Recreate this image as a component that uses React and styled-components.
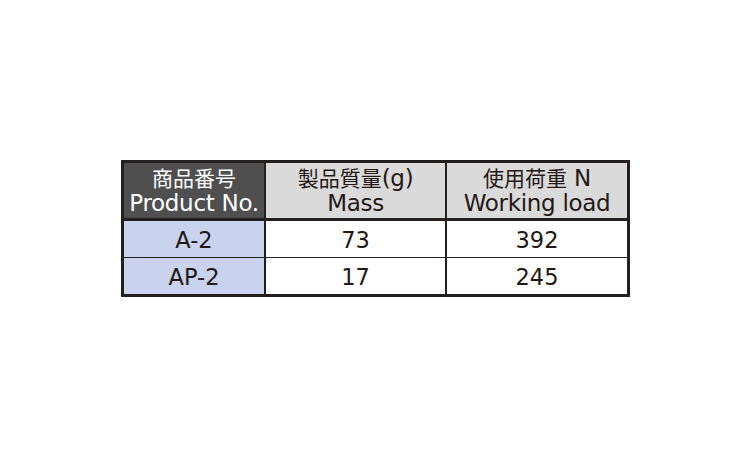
import React from "react";
import styled, { createGlobalStyle } from "styled-components";

const Global = createGlobalStyle`
  html, body { margin: 0; padding: 0; background: #ffffff; }
  body { width: 750px; height: 450px; font-family: "DejaVu Sans", "Noto Sans CJK JP", sans-serif; }
`;

const Page = styled.div`
  width: 750px;
  height: 450px;
  display: flex;
  align-items: flex-start;
  justify-content: flex-start;
  padding: 160px 0 0 121px;
  box-sizing: border-box;
`;

const Table = styled.table`
  border-collapse: collapse;
  border: 3px solid #231f1e;
  color: #231815;
  font-family: "DejaVu Sans", "Noto Sans CJK JP", sans-serif;
`;

const Head = styled.th`
  font-weight: 400;
  font-size: 23px;
  line-height: 25px;
  height: 54px;
  padding: 0 0 1px;
  text-align: center;
  vertical-align: middle;
  white-space: nowrap;
  letter-spacing: -0.3px;
  border-left: 2px solid #231f1e;
  border-bottom: 3px solid #231f1e;
  background: ${(p) => (p.$dark ? "#4f4f4f" : "#dadada")};
  color: ${(p) => (p.$dark ? "#ffffff" : "#231815")};
  width: ${(p) => p.$w}px;
`;

const Jp = styled.span`
  font-family: "Noto Sans CJK JP", sans-serif;
  font-size: 21px;
  letter-spacing: 0;
`;

const Cell = styled.td`
  font-size: 22.5px;
  height: 35px;
  padding: 1px 0 0;
  text-align: center;
  vertical-align: middle;
  border-left: 2px solid #231f1e;
  border-top: 1px solid #231f1e;
  background: ${(p) => (p.$blue ? "#c9d3ed" : "#ffffff")};
  line-height: 24px;
`;

const rows = [
  ["A-2", "73", "392"],
  ["AP-2", "17", "245"],
];

export default function App() {
  return (
    <>
      <Global />
      <Page>
        <Table>
          <thead>
            <tr>
              <Head $dark $w={140}><Jp>商品番号</Jp><br />Product No.</Head>
              <Head $w={179}><Jp>製品質量</Jp>(g)<br />Mass</Head>
              <Head $w={180}><Jp>使用荷重</Jp> N<br />Working load</Head>
            </tr>
          </thead>
          <tbody>
            {rows.map((r) => (
              <tr key={r[0]}>
                <Cell $blue>{r[0]}</Cell>
                <Cell>{r[1]}</Cell>
                <Cell>{r[2]}</Cell>
              </tr>
            ))}
          </tbody>
        </Table>
      </Page>
    </>
  );
}
